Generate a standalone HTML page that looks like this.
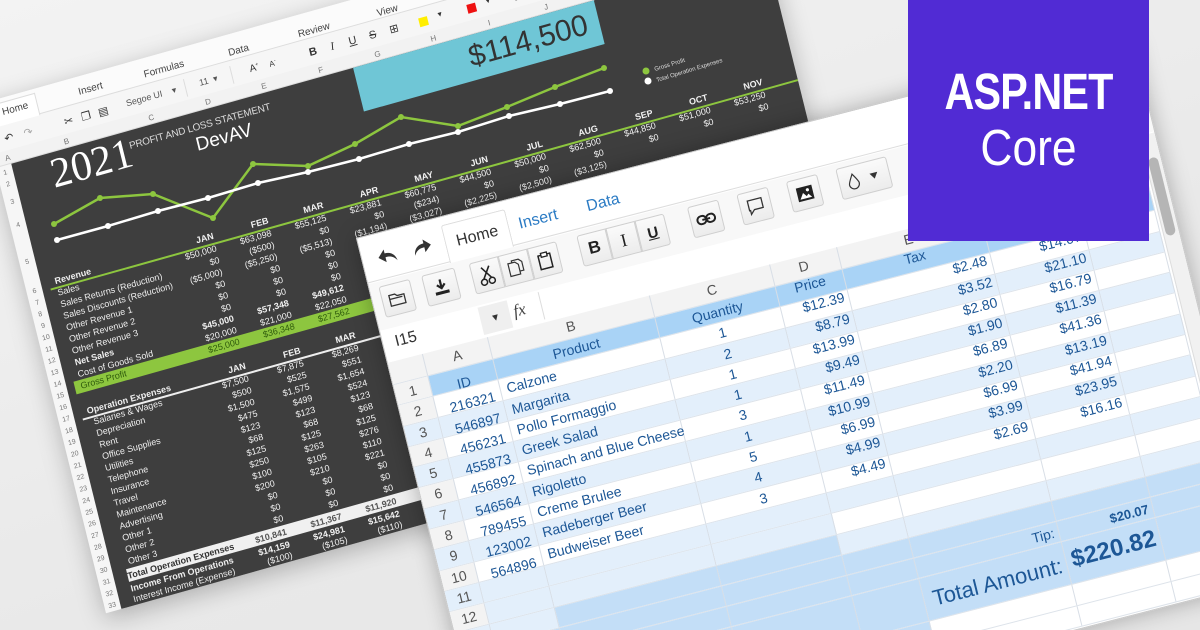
<!DOCTYPE html>
<html><head><meta charset="utf-8">
<style>
*{margin:0;padding:0;box-sizing:border-box}
html{width:1200px;height:630px;overflow:hidden}
body{width:1200px;height:630px;overflow:hidden;background:linear-gradient(160deg,#f3f3f3 0%,#e9e9e9 60%,#e6e6e6 100%);font-family:"Liberation Sans",sans-serif;position:relative}
.back{position:absolute;left:-20px;top:104px;width:800px;height:525px;background:#f6f6f6;transform-origin:0 0;transform:matrix(0.963,-0.27,0.24,0.97,0,0);box-shadow:0 6px 24px rgba(0,0,0,.25)}
.back .t{position:absolute;font-size:10px;color:#444;transform:translateX(-50%)}
.back .ic{position:absolute;font-size:11px;color:#333;transform:translateX(-50%)}
.back .cl{position:absolute;font-size:8px;color:#777;transform:translateX(-50%);top:55px}
.back .rn{position:absolute;left:2px;width:12px;text-align:center;font-size:7px;color:#777}
.dark{position:absolute;left:16px;top:66px;width:784px;height:459px;background:#3e3e3e}
.back .l{position:absolute;left:30px;font-size:9px;color:#eee;line-height:12px;white-space:nowrap}
.back .v{position:absolute;width:56px;text-align:right;font-size:9px;color:#f2f2f2;line-height:12px;white-space:nowrap}
.back .b{font-weight:bold}
.front{position:absolute;left:356px;top:238px;width:800px;height:560px;background:#fff;border:1px solid #c8c8c8;transform-origin:0 0;transform:matrix(0.97,-0.25,0.24,0.97,0,0);box-shadow:0 0 22px rgba(0,0,0,.28)}
.btn{position:absolute;top:52px;height:32px;background:linear-gradient(#fafafa,#ececec);border:1px solid #cfcfcf;border-radius:3px;display:flex;align-items:center;justify-content:center}
.row{display:flex;height:21.3px;border-bottom:1px solid #dde3ea}
.row div{border-right:1px solid #d8dee6;font-size:14px;color:#1d5796;line-height:21px;white-space:nowrap;overflow:visible}
.c0{width:36px;text-align:center;color:#555!important;background:#f3f3f3}
.c1{width:67px;text-align:right;padding-right:6px}
.c2{width:167px;padding-left:6px}
.c3{width:124px;text-align:center}
.c4{width:69px;text-align:right;padding-right:4px}
.c5{width:147px;text-align:right;padding-right:4px}
.c6{width:97px;text-align:right;padding-right:4px}
.c7{width:73px}
.hd div{background:#a9d3f6;text-align:center;padding:0}
.alt div{background:#e3effb}
.up{position:relative;top:-4px}
.dn{position:relative;top:5px}
</style></head><body>

<div class="back">
  <div style="position:absolute;left:0;top:0;width:800px;height:26px;background:#fbfbfb;border-bottom:1px solid #ddd"></div>
  <div style="position:absolute;left:10px;top:4px;width:46px;height:23px;background:#fff;border:1px solid #ddd;border-bottom:none"></div>
  <div class="t" style="left:33px;top:9px">Home</div>
  <div class="t" style="left:111px;top:10px">Insert</div>
  <div class="t" style="left:187px;top:11px">Formulas</div>
  <div class="t" style="left:264px;top:13px">Data</div>
  <div class="t" style="left:342px;top:14px">Review</div>
  <div class="t" style="left:418px;top:15px">View</div>
  <div class="ic" style="left:20px;top:34px">↶</div>
  <div class="ic" style="left:40px;top:34px;color:#aaa">↷</div>
  <div class="ic" style="left:82px;top:34px">✂</div>
  <div class="ic" style="left:100px;top:34px">❐</div>
  <div class="ic" style="left:118px;top:34px">▤</div>
  <div style="position:absolute;left:138px;top:31px;width:66px;height:18px;border-right:1px solid #ddd;font-size:9px;color:#555;padding:3px 4px">Segoe UI &nbsp;&nbsp;&nbsp;▾</div>
  <div style="position:absolute;left:212px;top:31px;width:40px;height:18px;border-right:1px solid #ddd;font-size:9px;color:#555;padding:3px 6px">11 &nbsp;▾</div>
  <div class="ic" style="left:275px;top:34px;font-size:10px">A<sup style="font-size:5px">+</sup></div>
  <div class="ic" style="left:294px;top:35px;font-size:8px">A<sup style="font-size:5px">-</sup></div>
  <div class="ic" style="left:336px;top:34px;font-weight:bold">B</div>
  <div class="ic" style="left:356px;top:34px;font-style:italic;font-family:'Liberation Serif',serif">I</div>
  <div class="ic" style="left:377px;top:34px;text-decoration:underline">U</div>
  <div class="ic" style="left:398px;top:34px;text-decoration:line-through">S</div>
  <div class="ic" style="left:420px;top:33px">⊞</div>
  <div style="position:absolute;left:446px;top:36px;width:9px;height:9px;background:#ffee00"></div><div class="ic" style="left:468px;top:35px;font-size:7px">▼</div>
  <div style="position:absolute;left:496px;top:36px;width:9px;height:9px;background:#ee1111"></div><div class="ic" style="left:518px;top:35px;font-size:7px">▼</div>
  <div style="position:absolute;left:545px;top:36px;width:9px;height:9px;background:#111"></div>
  <div style="position:absolute;left:0;top:52px;width:800px;height:14px;background:#f2f2f2;border-bottom:1px solid #ddd"></div>
  <div class="cl" style="left:14px">A</div><div class="cl" style="left:75px">B</div><div class="cl" style="left:163px">C</div><div class="cl" style="left:222px">D</div><div class="cl" style="left:280px">E</div><div class="cl" style="left:339px">F</div><div class="cl" style="left:398px">G</div><div class="cl" style="left:456px">H</div><div class="cl" style="left:514px">I</div><div class="cl" style="left:573px">J</div>
  <div class="rn" style="top:70px">1</div><div class="rn" style="top:82px">2</div><div class="rn" style="top:100px">3</div><div class="rn" style="top:124px">4</div><div class="rn" style="top:162px">5</div>
  <div class="rn" style="top:192px">6</div><div class="rn" style="top:204px">7</div><div class="rn" style="top:216px">8</div><div class="rn" style="top:228px">9</div><div class="rn" style="top:240px">10</div><div class="rn" style="top:252px">11</div><div class="rn" style="top:264px">12</div><div class="rn" style="top:276px">13</div><div class="rn" style="top:288px">14</div><div class="rn" style="top:300px">15</div><div class="rn" style="top:312px">16</div><div class="rn" style="top:324px">17</div><div class="rn" style="top:336px">18</div><div class="rn" style="top:348px">19</div><div class="rn" style="top:360px">20</div><div class="rn" style="top:372px">21</div><div class="rn" style="top:384px">22</div><div class="rn" style="top:396px">23</div><div class="rn" style="top:408px">24</div><div class="rn" style="top:420px">25</div><div class="rn" style="top:432px">26</div><div class="rn" style="top:444px">27</div><div class="rn" style="top:456px">28</div><div class="rn" style="top:468px">29</div><div class="rn" style="top:480px">30</div><div class="rn" style="top:492px">31</div><div class="rn" style="top:504px">32</div><div class="rn" style="top:516px">33</div>
  <div class="dark"></div>
  <div style="position:absolute;left:371px;top:66px;width:250px;height:45px;background:#6fc6d6;color:#333;font-size:30px;text-align:right;padding:5px 12px 0 0">$114,500</div>
  <div style="position:absolute;left:52px;top:64px;font-family:'Liberation Serif',serif;font-size:42px;color:#fff">2021</div>
  <div style="position:absolute;left:135px;top:76px;font-size:10px;color:#ddd;letter-spacing:-.2px">PROFIT AND LOSS STATEMENT</div>
  <div style="position:absolute;left:200px;top:88px;font-size:19px;color:#fff">DevAV</div>
  <div style="position:absolute;left:24px;top:197px;width:776px;height:1.5px;background:#8dc63f"></div>
  <div class="l b" style="top:185px">Revenue</div>
  <div class="v b" style="left:139px;top:184px">JAN</div><div class="v b" style="left:196px;top:184px">FEB</div><div class="v b" style="left:253px;top:184px">MAR</div><div class="v b" style="left:310px;top:184px">APR</div><div class="v b" style="left:367px;top:184px">MAY</div><div class="v b" style="left:424px;top:184px">JUN</div><div class="v b" style="left:481px;top:184px">JUL</div><div class="v b" style="left:538px;top:184px">AUG</div><div class="v b" style="left:595px;top:184px">SEP</div><div class="v b" style="left:652px;top:184px">OCT</div><div class="v b" style="left:709px;top:184px">NOV</div>
  <div style="position:absolute;left:24px;top:293px;width:312px;height:13px;background:#8dc63f"></div>
  <div class="l" style="top:197px">Sales</div><div class="l" style="top:209px">Sales Returns (Reduction)</div><div class="l" style="top:221px">Sales Discounts (Reduction)</div><div class="l" style="top:233px">Other Revenue 1</div><div class="l" style="top:245px">Other Revenue 2</div><div class="l" style="top:257px">Other Revenue 3</div><div class="l b" style="top:269px">Net Sales</div><div class="l" style="top:281px">Cost of Goods Sold</div><div class="l" style="top:293px;color:#2e5a0c">Gross Profit</div>
  <div class="v" style="left:139px;top:197px">$50,000</div><div class="v" style="left:139px;top:209px">$0</div><div class="v" style="left:139px;top:221px">($5,000)</div><div class="v" style="left:139px;top:233px">$0</div><div class="v" style="left:139px;top:245px">$0</div><div class="v" style="left:139px;top:257px">$0</div><div class="v b" style="left:139px;top:269px">$45,000</div><div class="v" style="left:139px;top:281px">$20,000</div><div class="v" style="left:139px;top:293px;color:#2e5a0c">$25,000</div>
  <div class="v" style="left:196px;top:197px">$63,098</div><div class="v" style="left:196px;top:209px">($500)</div><div class="v" style="left:196px;top:221px">($5,250)</div><div class="v" style="left:196px;top:233px">$0</div><div class="v" style="left:196px;top:245px">$0</div><div class="v" style="left:196px;top:257px">$0</div><div class="v b" style="left:196px;top:269px">$57,348</div><div class="v" style="left:196px;top:281px">$21,000</div><div class="v" style="left:196px;top:293px;color:#2e5a0c">$36,348</div>
  <div class="v" style="left:253px;top:197px">$55,125</div><div class="v" style="left:253px;top:209px">$0</div><div class="v" style="left:253px;top:221px">($5,513)</div><div class="v" style="left:253px;top:233px">$0</div><div class="v" style="left:253px;top:245px">$0</div><div class="v" style="left:253px;top:257px">$0</div><div class="v b" style="left:253px;top:269px">$49,612</div><div class="v" style="left:253px;top:281px">$22,050</div><div class="v" style="left:253px;top:293px;color:#2e5a0c">$27,562</div>
  <div class="v" style="left:310px;top:197px">$23,881</div><div class="v" style="left:310px;top:209px">$0</div><div class="v" style="left:310px;top:221px">($1,194)</div>
  <div class="v" style="left:367px;top:197px">$60,775</div><div class="v" style="left:367px;top:209px">($234)</div><div class="v" style="left:367px;top:221px">($3,027)</div>
  <div class="v" style="left:424px;top:197px">$44,500</div><div class="v" style="left:424px;top:209px">$0</div><div class="v" style="left:424px;top:221px">($2,225)</div>
  <div class="v" style="left:481px;top:197px">$50,000</div><div class="v" style="left:481px;top:209px">$0</div><div class="v" style="left:481px;top:221px">($2,500)</div>
  <div class="v" style="left:538px;top:197px">$62,500</div><div class="v" style="left:538px;top:209px">$0</div><div class="v" style="left:538px;top:221px">($3,125)</div>
  <div class="v" style="left:595px;top:197px">$44,850</div><div class="v" style="left:595px;top:209px">$0</div>
  <div class="v" style="left:652px;top:197px">$51,000</div><div class="v" style="left:652px;top:209px">$0</div>
  <div class="v" style="left:709px;top:197px">$53,250</div><div class="v" style="left:709px;top:209px">$0</div>
  <div style="position:absolute;left:24px;top:331px;width:310px;height:1.5px;background:#eee"></div>
  <div class="l b" style="top:319px">Operation Expenses</div>
  <div class="v b" style="left:139px;top:318px">JAN</div><div class="v b" style="left:196px;top:318px">FEB</div><div class="v b" style="left:253px;top:318px">MAR</div>
  <div class="l" style="top:331px;left:34px">Salaries &amp; Wages</div><div class="l" style="top:343px;left:34px">Depreciation</div><div class="l" style="top:355px;left:34px">Rent</div><div class="l" style="top:367px;left:34px">Office Supplies</div><div class="l" style="top:379px;left:34px">Utilities</div><div class="l" style="top:391px;left:34px">Telephone</div><div class="l" style="top:403px;left:34px">Insurance</div><div class="l" style="top:415px;left:34px">Travel</div><div class="l" style="top:427px;left:34px">Maintenance</div><div class="l" style="top:439px;left:34px">Advertising</div><div class="l" style="top:451px;left:34px">Other 1</div><div class="l" style="top:463px;left:34px">Other 2</div><div class="l" style="top:475px;left:34px">Other 3</div>
  <div class="v" style="left:139px;top:331px">$7,500</div><div class="v" style="left:139px;top:343px">$500</div><div class="v" style="left:139px;top:355px">$1,500</div><div class="v" style="left:139px;top:367px">$475</div><div class="v" style="left:139px;top:379px">$123</div><div class="v" style="left:139px;top:391px">$68</div><div class="v" style="left:139px;top:403px">$125</div><div class="v" style="left:139px;top:415px">$250</div><div class="v" style="left:139px;top:427px">$100</div><div class="v" style="left:139px;top:439px">$200</div><div class="v" style="left:139px;top:451px">$0</div><div class="v" style="left:139px;top:463px">$0</div><div class="v" style="left:139px;top:475px">$0</div>
  <div class="v" style="left:196px;top:331px">$7,875</div><div class="v" style="left:196px;top:343px">$525</div><div class="v" style="left:196px;top:355px">$1,575</div><div class="v" style="left:196px;top:367px">$499</div><div class="v" style="left:196px;top:379px">$123</div><div class="v" style="left:196px;top:391px">$68</div><div class="v" style="left:196px;top:403px">$125</div><div class="v" style="left:196px;top:415px">$263</div><div class="v" style="left:196px;top:427px">$105</div><div class="v" style="left:196px;top:439px">$210</div><div class="v" style="left:196px;top:451px">$0</div><div class="v" style="left:196px;top:463px">$0</div><div class="v" style="left:196px;top:475px">$0</div>
  <div class="v" style="left:253px;top:331px">$8,269</div><div class="v" style="left:253px;top:343px">$551</div><div class="v" style="left:253px;top:355px">$1,654</div><div class="v" style="left:253px;top:367px">$524</div><div class="v" style="left:253px;top:379px">$123</div><div class="v" style="left:253px;top:391px">$68</div><div class="v" style="left:253px;top:403px">$125</div><div class="v" style="left:253px;top:415px">$276</div><div class="v" style="left:253px;top:427px">$110</div><div class="v" style="left:253px;top:439px">$221</div><div class="v" style="left:253px;top:451px">$0</div><div class="v" style="left:253px;top:463px">$0</div><div class="v" style="left:253px;top:475px">$0</div>
  <div style="position:absolute;left:30px;top:488px;width:770px;height:13px;background:#f0f0f0"></div>
  <div class="l b" style="top:489px;color:#333">Total Operation Expenses</div>
  <div class="v b" style="left:139px;top:489px;color:#555">$10,841</div><div class="v b" style="left:196px;top:489px;color:#555">$11,367</div><div class="v b" style="left:253px;top:489px;color:#555">$11,920</div>
  <div class="l b" style="top:502px">Income From Operations</div>
  <div class="v b" style="left:139px;top:502px">$14,159</div><div class="v b" style="left:196px;top:502px">$24,981</div><div class="v b" style="left:253px;top:502px">$15,642</div>
  <div class="l" style="top:513px">Interest Income (Expense)</div>
  <div class="v" style="left:139px;top:513px">($100)</div><div class="v" style="left:196px;top:513px">($105)</div><div class="v" style="left:253px;top:513px">($110)</div>
</div>

<svg style="position:absolute;left:0;top:0" width="1200" height="630">
  <polyline fill="none" stroke="#8dc63f" stroke-width="2.5" points="54,224 100,198 153,194 213,218 253,164 308,166 355,144 401,117 458,126 507,107 555,87 604,68"/>
  <polyline fill="none" stroke="#fff" stroke-width="2.5" points="57,240 108,226 158,211 208,198 258,183 308,172 359,159 409,144 458,132 509,116 560,104 610,91"/>
  <g fill="#8dc63f"><circle cx="54" cy="224" r="3"/><circle cx="100" cy="198" r="3"/><circle cx="153" cy="194" r="3"/><circle cx="213" cy="218" r="3"/><circle cx="253" cy="164" r="3"/><circle cx="308" cy="166" r="3"/><circle cx="355" cy="144" r="3"/><circle cx="401" cy="117" r="3"/><circle cx="458" cy="126" r="3"/><circle cx="507" cy="107" r="3"/><circle cx="555" cy="87" r="3"/><circle cx="604" cy="68" r="3"/><circle cx="646" cy="71" r="3.5"/></g>
  <g fill="#fff"><circle cx="57" cy="240" r="3"/><circle cx="108" cy="226" r="3"/><circle cx="158" cy="211" r="3"/><circle cx="208" cy="198" r="3"/><circle cx="258" cy="183" r="3"/><circle cx="308" cy="172" r="3"/><circle cx="359" cy="159" r="3"/><circle cx="409" cy="144" r="3"/><circle cx="458" cy="132" r="3"/><circle cx="509" cy="116" r="3"/><circle cx="560" cy="104" r="3"/><circle cx="610" cy="91" r="3"/><circle cx="648" cy="81" r="3.5"/></g>
  <text x="655" y="71" font-size="6" fill="#ddd" font-family="Liberation Sans" transform="rotate(-17 655 71)">Gross Profit</text>
  <text x="657" y="82" font-size="6" fill="#ddd" font-family="Liberation Sans" transform="rotate(-17 657 82)">Total Operation Expenses</text>
</svg>

<div class="front">
  <div style="position:absolute;left:0;top:0;width:798px;height:46px;background:#fff;border-bottom:1px solid #ddd"></div>
  <svg style="position:absolute;left:14px;top:14px" width="60" height="22"><path d="M2 10 L9 3 L9 7 C15 7 19 10 20 17 C17 12 14 11 9 11 L9 16 Z" fill="#333"/><path d="M56 10 L49 3 L49 7 C43 7 39 10 38 17 C41 12 44 11 49 11 L49 16 Z" fill="#333"/></svg>
  <div style="position:absolute;left:84px;top:8px;width:66px;height:39px;background:#fff;border:1px solid #ddd;border-bottom:none;border-radius:3px 3px 0 0;font-size:16px;color:#333;text-align:center;padding-top:10px">Home</div>
  <div style="position:absolute;left:160px;top:18px;font-size:16px;color:#2b7bc4">Insert</div>
  <div style="position:absolute;left:230px;top:18px;font-size:16px;color:#2b7bc4">Data</div>
  <div style="position:absolute;left:0;top:47px;width:798px;height:48px;background:#f8f8f8"></div>
  <div class="btn" style="left:9px;width:32px"><svg width="18" height="16"><path d="M1 3 H7 L9 5 H16 V14 H1 Z M1 7 H14" fill="none" stroke="#333" stroke-width="1.3"/></svg></div>
  <div class="btn" style="left:53px;width:34px"><svg width="18" height="18"><path d="M9 1 V10 M5 6 L9 10 L13 6" fill="none" stroke="#222" stroke-width="2.2"/><rect x="2" y="13" width="14" height="3" fill="#222"/></svg></div>
  <div class="btn" style="left:102px;width:30px;border-radius:3px 0 0 3px"><svg width="18" height="20"><path d="M5 1 L13 13 M13 1 L5 13" stroke="#222" stroke-width="1.6"/><circle cx="5" cy="16" r="3" fill="none" stroke="#222" stroke-width="1.5"/><circle cx="13" cy="16" r="3" fill="none" stroke="#222" stroke-width="1.5"/></svg></div>
  <div class="btn" style="left:132px;width:30px;border-radius:0"><svg width="16" height="18"><path d="M1 3 H8 L11 6 V16 H1 Z M5 3 V1 H12 L15 4 V13 H11" fill="none" stroke="#333" stroke-width="1.2"/></svg></div>
  <div class="btn" style="left:162px;width:30px;border-radius:0 3px 3px 0"><svg width="16" height="18"><rect x="2" y="3" width="12" height="14" fill="none" stroke="#222" stroke-width="1.5"/><rect x="5" y="1" width="6" height="4" fill="#fff" stroke="#222" stroke-width="1.3"/></svg></div>
  <div class="btn" style="left:213px;width:30px;border-radius:3px 0 0 3px;font-weight:bold;font-size:17px;color:#222">B</div>
  <div class="btn" style="left:243px;width:30px;border-radius:0;font-family:'Liberation Serif',serif;font-size:18px;color:#222">I</div>
  <div class="btn" style="left:273px;width:30px;border-radius:0 3px 3px 0;font-weight:bold;font-size:15px;color:#222;text-decoration:underline">U</div>
  <div class="btn" style="left:327px;width:32px"><svg width="20" height="12"><rect x="1" y="2" width="9" height="8" rx="4" fill="none" stroke="#222" stroke-width="2"/><rect x="10" y="2" width="9" height="8" rx="4" fill="none" stroke="#222" stroke-width="2"/><path d="M6 6 H14" stroke="#222" stroke-width="2"/></svg></div>
  <div class="btn" style="left:378px;width:32px"><svg width="18" height="18"><path d="M2 2 H16 V12 H7 L3 16 V12 H2 Z" fill="none" stroke="#333" stroke-width="1.3"/></svg></div>
  <div class="btn" style="left:429px;width:32px"><svg width="18" height="16"><rect x="1" y="1" width="16" height="14" fill="#222"/><path d="M3 13 L7 7 L10 11 L12 9 L15 13 Z" fill="#fff"/><circle cx="12" cy="5" r="1.6" fill="#fff"/></svg></div>
  <div class="btn" style="left:480px;width:52px"><svg width="36" height="18"><path d="M7 2 C4 7 2 10 2 12 A5 5 0 0 0 12 12 C12 10 10 7 7 2 Z" fill="none" stroke="#333" stroke-width="1.2"/><path d="M24 6 L32 6 L28 12 Z" fill="#333"/></svg></div>
  <div style="position:absolute;left:4px;top:97px;width:96px;height:28px;background:#fff;font-size:16px;color:#333;padding:4px 8px">I15</div>
  <div style="position:absolute;left:100px;top:97px;width:30px;height:28px;background:#efefef;font-size:10px;color:#333;text-align:center;padding-top:9px">▼</div>
  <div style="position:absolute;left:134px;top:97px;width:26px;height:28px;font-family:'Liberation Serif',serif;font-style:italic;font-size:17px;color:#444;padding-top:3px">fx</div>
  <div style="position:absolute;left:162px;top:97px;width:620px;height:28px;background:#fff;border-left:1px solid #ddd"></div>
  <div style="position:absolute;left:0;top:128px;width:780px">
    <div class="row" style="height:23px;background:#f3f3f3">
      <div class="c0"></div><div class="c1" style="text-align:center;color:#555;padding:0">A</div><div class="c2" style="text-align:center;color:#555;padding:0">B</div><div class="c3" style="color:#555">C</div><div class="c4" style="text-align:center;color:#555">D</div><div class="c5" style="text-align:center;color:#555">E</div><div class="c6" style="text-align:center;color:#555">F</div><div class="c7" style="text-align:center;color:#555">G</div>
    </div>
    <div class="row hd"><div class="c0" style="background:#f3f3f3">1</div><div class="c1"><span class="dn">ID</span></div><div class="c2">Product</div><div class="c3">Quantity</div><div class="c4"><span class="up">Price</span></div><div class="c5"><span class="up">Tax</span></div><div class="c6"></div><div class="c7"></div></div>
    <div class="row"><div class="c0">2</div><div class="c1"><span class="dn">216321</span></div><div class="c2">Calzone</div><div class="c3">1</div><div class="c4"><span class="up">$12.39</span></div><div class="c5"><span class="up">$2.48</span></div><div class="c6"><span class="up">$14.07</span></div><div class="c7"></div></div>
    <div class="row alt"><div class="c0">3</div><div class="c1"><span class="dn">546897</span></div><div class="c2">Margarita</div><div class="c3">2</div><div class="c4"><span class="up">$8.79</span></div><div class="c5"><span class="up">$3.52</span></div><div class="c6"><span class="up">$21.10</span></div><div class="c7"></div></div>
    <div class="row"><div class="c0">4</div><div class="c1"><span class="dn">456231</span></div><div class="c2">Pollo Formaggio</div><div class="c3">1</div><div class="c4"><span class="up">$13.99</span></div><div class="c5"><span class="up">$2.80</span></div><div class="c6"><span class="up">$16.79</span></div><div class="c7"></div></div>
    <div class="row alt"><div class="c0">5</div><div class="c1"><span class="dn">455873</span></div><div class="c2">Greek Salad</div><div class="c3">1</div><div class="c4"><span class="up">$9.49</span></div><div class="c5"><span class="up">$1.90</span></div><div class="c6"><span class="up">$11.39</span></div><div class="c7"></div></div>
    <div class="row"><div class="c0">6</div><div class="c1"><span class="dn">456892</span></div><div class="c2">Spinach and Blue Cheese</div><div class="c3">3</div><div class="c4"><span class="up">$11.49</span></div><div class="c5"><span class="up">$6.89</span></div><div class="c6"><span class="up">$41.36</span></div><div class="c7"></div></div>
    <div class="row alt"><div class="c0">7</div><div class="c1"><span class="dn">546564</span></div><div class="c2">Rigoletto</div><div class="c3">1</div><div class="c4"><span class="up">$10.99</span></div><div class="c5"><span class="up">$2.20</span></div><div class="c6"><span class="up">$13.19</span></div><div class="c7"></div></div>
    <div class="row"><div class="c0">8</div><div class="c1"><span class="dn">789455</span></div><div class="c2">Creme Brulee</div><div class="c3">5</div><div class="c4"><span class="up">$6.99</span></div><div class="c5"><span class="up">$6.99</span></div><div class="c6"><span class="up">$41.94</span></div><div class="c7"></div></div>
    <div class="row alt"><div class="c0">9</div><div class="c1"><span class="dn">123002</span></div><div class="c2">Radeberger Beer</div><div class="c3">4</div><div class="c4"><span class="up">$4.99</span></div><div class="c5"><span class="up">$3.99</span></div><div class="c6"><span class="up">$23.95</span></div><div class="c7"></div></div>
    <div class="row"><div class="c0">10</div><div class="c1"><span class="dn">564896</span></div><div class="c2">Budweiser Beer</div><div class="c3">3</div><div class="c4"><span class="up">$4.49</span></div><div class="c5"><span class="up">$2.69</span></div><div class="c6"><span class="up">$16.16</span></div><div class="c7"></div></div>
    <div class="row alt"><div class="c0">11</div><div class="c1"></div><div class="c2"></div><div class="c3"></div><div class="c4"></div><div class="c5"></div><div class="c6"></div><div class="c7"></div></div>
    <div class="row"><div class="c0">12</div><div class="c1" style="background:#e3effb"></div><div class="c2" style="background:#e3effb"></div><div class="c3" style="background:#e3effb"></div><div class="c4"></div><div class="c5"></div><div class="c6"></div><div class="c7"></div></div>
    <div class="row alt"><div class="c0">13</div><div class="c1"></div><div class="c2" style="background:#c3def7"></div><div class="c3" style="background:#c3def7"></div><div class="c4"></div><div class="c5"></div><div class="c6"></div><div class="c7"></div></div>
    <div class="row"><div class="c0">14</div><div class="c1" style="background:#c3def7"></div><div class="c2" style="background:#c3def7"></div><div class="c3" style="background:#c3def7"></div><div class="c4" style="background:#c3def7"></div><div class="c5" style="background:#c3def7"></div><div class="c6" style="background:#c3def7"></div><div class="c7" style="background:#c3def7"></div></div>
    <div class="row"><div class="c0">15</div><div class="c1" style="background:#c3def7"></div><div class="c2" style="background:#c3def7"></div><div class="c3" style="background:#c3def7"></div><div class="c4" style="background:#c3def7"></div><div class="c5" style="background:#c3def7">Tip:</div><div class="c6" style="background:#c3def7;font-weight:bold;font-size:13px">$20.07</div><div class="c7" style="background:#c3def7"></div></div>
    <div class="row" style="height:44px"><div class="c0">16</div><div class="c1" style="background:#c3def7"></div><div class="c2" style="background:#c3def7"></div><div class="c3" style="background:#c3def7"></div><div class="c4" style="background:#c3def7"></div><div class="c5" style="background:#c3def7;font-size:22px;line-height:46px;overflow:visible">Total Amount:</div><div class="c6" style="background:#c3def7;font-size:24px;font-weight:bold;line-height:40px">$220.82</div><div class="c7" style="background:#c3def7"></div></div>
    <div class="row"><div class="c0">17</div><div class="c1" style="background:#c3def7"></div><div class="c2" style="background:#c3def7"></div><div class="c3" style="background:#c3def7"></div><div class="c4" style="background:#c3def7"></div><div class="c5"></div><div class="c6"></div><div class="c7"></div></div>
    <div class="row"><div class="c0">18</div><div class="c1" style="background:#c3def7"></div><div class="c2" style="background:#c3def7"></div><div class="c3" style="background:#c3def7"></div><div class="c4" style="background:#c3def7"></div><div class="c5"></div><div class="c6"></div><div class="c7"></div></div>
  </div>
  <div style="position:absolute;left:782px;top:96px;width:16px;height:462px;background:#f1f1f1;border-left:1px solid #ddd"></div>
  <div style="position:absolute;left:785px;top:120px;width:10px;height:80px;background:#b5b5b5;border-radius:5px"></div>
</div>

<div style="position:absolute;left:908px;top:0;width:241px;height:241px;background:#512bd4;color:#fff;text-align:center">
  <div style="position:absolute;left:0;width:241px;top:64px;font-size:51px;font-weight:bold;line-height:56px;transform:scaleX(0.81);letter-spacing:-1px">ASP.NET</div>
  <div style="position:absolute;left:0;width:241px;top:120px;font-size:51px;line-height:56px;transform:scaleX(0.87)">Core</div>
</div>
</body></html>
